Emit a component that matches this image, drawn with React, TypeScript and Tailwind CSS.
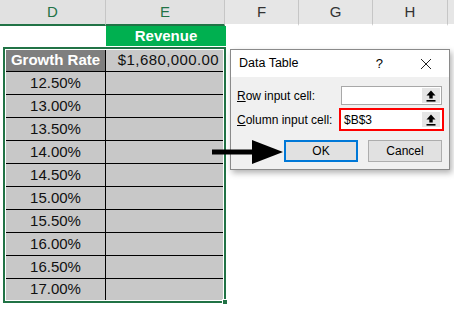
import React from "react"

const rates = ["12.50%", "13.00%", "13.50%", "14.00%", "14.50%", "15.00%", "15.50%", "16.00%", "16.50%", "17.00%"]

function UpIcon() {
  return (
    <svg width="10" height="12" viewBox="0 0 10 12">
      <polygon points="5,0.5 9.5,5.5 6.7,5.5 6.7,8.5 3.3,8.5 3.3,5.5 0.5,5.5" fill="#000" />
      <rect x="0.5" y="10" width="9" height="1.6" fill="#000" />
    </svg>
  )
}

export default function App() {
  return (
    <div
      className="relative w-[454px] h-[311px] bg-white overflow-hidden"
      style={{ fontFamily: '"Liberation Sans", Arial, sans-serif' }}
    >
      {/* Column headers */}
      <div className="flex h-[26px] text-[15px]">
        <div className="w-[106px] h-[26px] bg-[#e1e1e1] border-r border-[#c6c6c6] border-b-2 border-b-[#217346] flex items-center justify-center text-[#217346]">
          D
        </div>
        <div className="w-[119px] h-[26px] bg-[#e1e1e1] border-r border-[#c6c6c6] border-b-2 border-b-[#217346] flex items-center justify-center text-[#217346]">
          E
        </div>
        <div className="w-[74px] h-[26px] bg-[#e6e6e6] border-r border-[#c6c6c6] border-b-2 border-b-white flex items-center justify-center text-[#333]">
          F
        </div>
        <div className="w-[74px] h-[26px] bg-[#e6e6e6] border-r border-[#c6c6c6] border-b-2 border-b-white flex items-center justify-center text-[#333]">
          G
        </div>
        <div className="w-[75px] h-[26px] bg-[#e6e6e6] border-r border-[#c6c6c6] border-b-2 border-b-white flex items-center justify-center text-[#333]">
          H
        </div>
        <div className="flex-1 h-[26px] bg-[#e6e6e6] border-b-2 border-b-white" />
      </div>

      {/* Row with Revenue title */}
      <div className="flex h-[21px]">
        <div className="w-[106px]" />
        <div className="w-[120px] h-[20px] bg-[#00b050] text-white font-bold text-[15px] flex items-center justify-center">
          Revenue
        </div>
      </div>

      {/* Selected data table range */}
      <div className="relative ml-[3px] w-[223px] border-2 border-[#217346] bg-white p-px text-[15px] text-[#111]">
        <div className="flex h-[22px] border-b border-black">
          <div className="w-[100px] border-r border-black bg-[#7f7f7f] text-white font-bold flex items-center justify-center">
            Growth Rate
          </div>
          <div className="flex-1 bg-[#c8c8c8] flex items-center justify-end pr-[4px] tracking-[0.4px]">
            $1,680,000.00
          </div>
        </div>
        {rates.map((r, i) => (
          <div
            key={r}
            className={i === rates.length - 1 ? "flex h-[21px]" : "flex h-[23px] border-b border-black"}
          >
            <div className="w-[100px] border-r border-black bg-[#c8c8c8] flex items-center justify-center">{r}</div>
            <div className="flex-1 bg-[#c8c8c8]" />
          </div>
        ))}
        {/* fill handle */}
        <div className="absolute right-[-4px] bottom-[-4px] w-[6px] h-[6px] bg-[#217346] border border-white" />
      </div>

      {/* Data Table dialog */}
      <div className="absolute left-[230px] top-[49px] w-[220px] h-[121px] border border-[#8a8a8a] bg-[#f0f0f0] shadow-[2px_3px_6px_rgba(0,0,0,0.3)] text-[12px] text-black">
        <div className="h-[27px] bg-white flex items-center pl-[8px]">
          <span className="flex-1 text-[12.5px]">Data Table</span>
          <span className="text-[13px] mr-[37px]">?</span>
          <svg width="12" height="12" viewBox="0 0 12 12" className="mr-[17px]">
            <path d="M1 1L11 11M11 1L1 11" stroke="#222" strokeWidth="1" />
          </svg>
        </div>
        <div className="pt-[9px] pl-[6px] pr-[7px]">
          <div className="flex items-center justify-between h-[19px]">
            <span>
              <span className="underline">R</span>ow input cell:
            </span>
            <div className="w-[101px] h-[19px] border border-[#a8a8a8] bg-white flex items-center justify-end">
              <div className="w-[20px] h-[17px] bg-[#e5e5e5] border border-white flex items-center justify-center">
                <UpIcon />
              </div>
            </div>
          </div>
          <div className="flex items-center justify-between h-[23px] mt-[3px]">
            <span>
              <span className="underline">C</span>olumn input cell:
            </span>
            <div className="w-[105px] h-[23px] mr-[-2px] border-2 border-[#ff0000] bg-white flex items-center">
              <span className="flex-1 pl-[3px]">$B$3</span>
              <div className="w-[20px] h-[17px] mr-px bg-[#e5e5e5] border border-white flex items-center justify-center">
                <UpIcon />
              </div>
            </div>
          </div>
          <div className="flex justify-end gap-[10px] mt-[9px]">
            <button className="w-[74px] h-[22px] border-2 border-[#0078d7] bg-[#e1e1e1] flex items-center justify-center">
              OK
            </button>
            <button className="w-[74px] h-[22px] border border-[#adadad] bg-[#e1e1e1] flex items-center justify-center">
              Cancel
            </button>
          </div>
        </div>
      </div>

      {/* Pointer arrow */}
      <svg className="absolute left-[212px] top-[139px]" width="72" height="26" viewBox="0 0 72 26">
        <rect x="0" y="10.5" width="42" height="5" fill="#000" />
        <polygon points="40,1 71,13 40,25" fill="#000" />
      </svg>
    </div>
  )
}
